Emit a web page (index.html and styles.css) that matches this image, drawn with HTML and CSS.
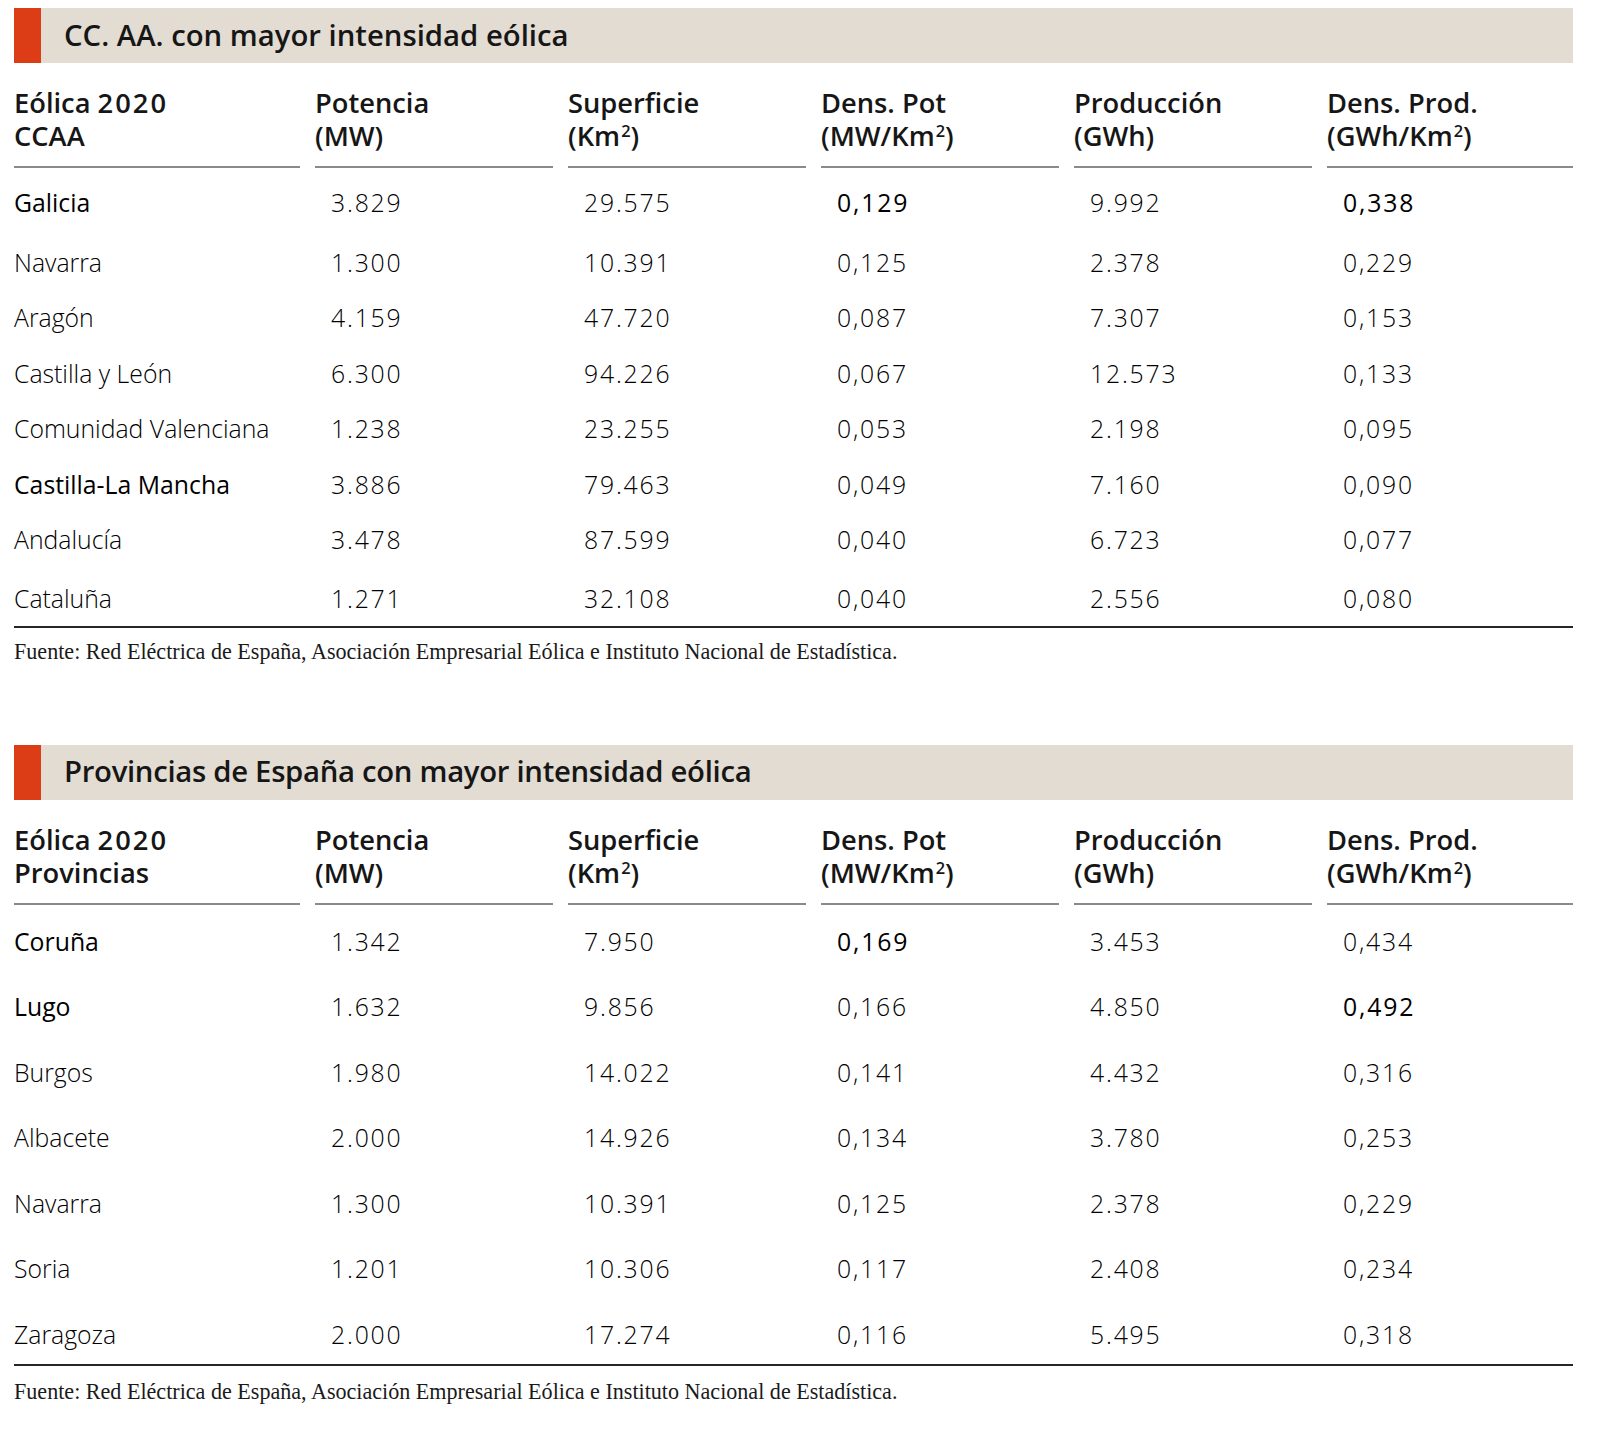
FILE: index.html
```html
<!DOCTYPE html>
<html lang="es">
<head>
<meta charset="utf-8">
<title>Intensidad eólica</title>
<link rel="stylesheet" href="styles.css">
</head>
<body>
<div class="page">

  <section class="block block-ccaa">
    <h2 class="title"><span class="mark"></span><span class="title-text">CC. AA. con mayor intensidad eólica</span></h2>
    <div class="table">
      <div class="row head">
        <div class="cell">Eólica <span class="digits">2020</span><br>CCAA</div>
        <div class="cell">Potencia<br>(MW)</div>
        <div class="cell">Superficie<br>(Km<span class="sup">2</span>)</div>
        <div class="cell">Dens. Pot<br>(MW/Km<span class="sup">2</span>)</div>
        <div class="cell">Producción<br>(GWh)</div>
        <div class="cell">Dens. Prod.<br>(GWh/Km<span class="sup">2</span>)</div>
      </div>
      <div class="body">
        <div class="row"><div class="cell name em">Galicia</div><div class="cell num">3.829</div><div class="cell num">29.575</div><div class="cell num em">0,129</div><div class="cell num">9.992</div><div class="cell num em">0,338</div></div>
        <div class="row"><div class="cell name">Navarra</div><div class="cell num">1.300</div><div class="cell num">10.391</div><div class="cell num">0,125</div><div class="cell num">2.378</div><div class="cell num">0,229</div></div>
        <div class="row"><div class="cell name">Aragón</div><div class="cell num">4.159</div><div class="cell num">47.720</div><div class="cell num">0,087</div><div class="cell num">7.307</div><div class="cell num">0,153</div></div>
        <div class="row"><div class="cell name">Castilla y León</div><div class="cell num">6.300</div><div class="cell num">94.226</div><div class="cell num">0,067</div><div class="cell num">12.573</div><div class="cell num">0,133</div></div>
        <div class="row"><div class="cell name">Comunidad Valenciana</div><div class="cell num">1.238</div><div class="cell num">23.255</div><div class="cell num">0,053</div><div class="cell num">2.198</div><div class="cell num">0,095</div></div>
        <div class="row"><div class="cell name em">Castilla-La Mancha</div><div class="cell num">3.886</div><div class="cell num">79.463</div><div class="cell num">0,049</div><div class="cell num">7.160</div><div class="cell num">0,090</div></div>
        <div class="row"><div class="cell name">Andalucía</div><div class="cell num">3.478</div><div class="cell num">87.599</div><div class="cell num">0,040</div><div class="cell num">6.723</div><div class="cell num">0,077</div></div>
        <div class="row"><div class="cell name">Cataluña</div><div class="cell num">1.271</div><div class="cell num">32.108</div><div class="cell num">0,040</div><div class="cell num">2.556</div><div class="cell num">0,080</div></div>
      </div>
    </div>
    <p class="source"><span class="src-label">Fuente:</span> Red Eléctrica de España, Asociación Empresarial Eólica e Instituto Nacional de Estadística.</p>
  </section>

  <section class="block block-prov">
    <h2 class="title"><span class="mark"></span><span class="title-text">Provincias de España con mayor intensidad eólica</span></h2>
    <div class="table">
      <div class="row head">
        <div class="cell">Eólica <span class="digits">2020</span><br>Provincias</div>
        <div class="cell">Potencia<br>(MW)</div>
        <div class="cell">Superficie<br>(Km<span class="sup">2</span>)</div>
        <div class="cell">Dens. Pot<br>(MW/Km<span class="sup">2</span>)</div>
        <div class="cell">Producción<br>(GWh)</div>
        <div class="cell">Dens. Prod.<br>(GWh/Km<span class="sup">2</span>)</div>
      </div>
      <div class="body">
        <div class="row"><div class="cell name em">Coruña</div><div class="cell num">1.342</div><div class="cell num">7.950</div><div class="cell num em">0,169</div><div class="cell num">3.453</div><div class="cell num">0,434</div></div>
        <div class="row"><div class="cell name em">Lugo</div><div class="cell num">1.632</div><div class="cell num">9.856</div><div class="cell num">0,166</div><div class="cell num">4.850</div><div class="cell num em">0,492</div></div>
        <div class="row"><div class="cell name">Burgos</div><div class="cell num">1.980</div><div class="cell num">14.022</div><div class="cell num">0,141</div><div class="cell num">4.432</div><div class="cell num">0,316</div></div>
        <div class="row"><div class="cell name">Albacete</div><div class="cell num">2.000</div><div class="cell num">14.926</div><div class="cell num">0,134</div><div class="cell num">3.780</div><div class="cell num">0,253</div></div>
        <div class="row"><div class="cell name">Navarra</div><div class="cell num">1.300</div><div class="cell num">10.391</div><div class="cell num">0,125</div><div class="cell num">2.378</div><div class="cell num">0,229</div></div>
        <div class="row"><div class="cell name">Soria</div><div class="cell num">1.201</div><div class="cell num">10.306</div><div class="cell num">0,117</div><div class="cell num">2.408</div><div class="cell num">0,234</div></div>
        <div class="row"><div class="cell name">Zaragoza</div><div class="cell num">2.000</div><div class="cell num">17.274</div><div class="cell num">0,116</div><div class="cell num">5.495</div><div class="cell num">0,318</div></div>
      </div>
    </div>
    <p class="source"><span class="src-label">Fuente:</span> Red Eléctrica de España, Asociación Empresarial Eólica e Instituto Nacional de Estadística.</p>
  </section>

</div>
</body>
</html>
```

FILE: styles.css
```css
* { box-sizing: border-box; }

html, body {
  margin: 0;
  padding: 0;
  background: #ffffff;
}

body {
  font-family: "Open Sans", "Noto Sans", "DejaVu Sans", sans-serif;
  color: #1a1a1a;
}

.page {
  width: 1600px;
  padding: 8px 27px 0 14px;
}

.block-prov {
  margin-top: 79px;
}

.title {
  display: flex;
  align-items: stretch;
  height: 55px;
  margin: 0;
  background: #e2dcd2;
  font-weight: 600;
  font-size: 29.3px;
  letter-spacing: -0.3px;
  color: #161616;
}

.block-ccaa .title {
  letter-spacing: 0;
}

.mark {
  width: 27px;
  background: #dc3d17;
  flex: none;
}

.title-text {
  display: flex;
  align-items: center;
  padding-left: 23px;
  padding-bottom: 2px;
}

.table {
  display: flex;
  flex-direction: column;
}

.row {
  display: grid;
  grid-template-columns: 286px repeat(4, 238px) 1fr;
  column-gap: 15px;
}

.head {
  margin-top: 23px;
}

.head .cell {
  font-weight: 600;
  font-size: 27.3px;
  line-height: 33px;
  letter-spacing: 0;
  color: #161616;
  padding-bottom: 14px;
  border-bottom: 2px solid #8a8a8a;
}

.digits {
  letter-spacing: 2px;
}

.sup {
  font-size: 0.6em;
  vertical-align: 0.55em;
  line-height: 0;
  margin-left: 1px;
}

.body {
  display: flex;
  flex-direction: column;
  padding-top: 19px;
  padding-bottom: 13px;
  border-bottom: 2px solid #262626;
}

.body .cell {
  font-size: 24.8px;
  line-height: 30px;
  font-weight: 300;
  color: #000;
}

.body .num {
  padding-left: 16px;
  letter-spacing: 1.8px;
}

.body .em {
  font-weight: 400;
  color: #000;
}

.block-ccaa .body { gap: 25.5px; }
.block-ccaa .body .row:nth-child(2) { margin-top: 4px; }
.block-ccaa .body .row:last-child { margin-top: 3px; }

.block-prov .head { margin-top: 23px; }
.block-prov .body { gap: 35.5px; padding-top: 21px; padding-bottom: 15px; }

.source {
  margin: 10px 0 0 0;
  font-family: "Liberation Serif", "DejaVu Serif", serif;
  font-size: 22.1px;
  line-height: 28px;
  color: #1a1a1a;
  letter-spacing: 0;
}

.block-prov .source { margin-top: 12px; }
```
